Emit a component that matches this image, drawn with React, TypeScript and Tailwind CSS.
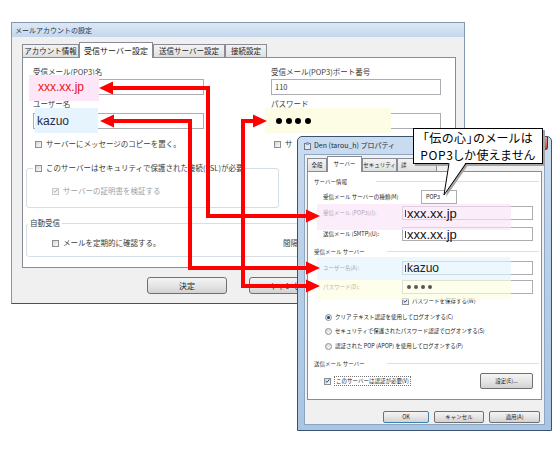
import React from "react";

const lat = "font-['Liberation_Sans','Noto_Sans_CJK_JP',sans-serif]";

function Check({ on, dim, blue }: { on?: boolean; dim?: boolean; blue?: boolean }) {
  return (
    <span
      className={`inline-flex h-[7px] w-[7px] shrink-0 items-center justify-center border ${
        dim ? "border-[#c8c8c8] bg-[#f6f6f6]" : "border-[#8e8f8f] bg-gradient-to-br from-[#d6d6d6] to-[#fbfbfb]"
      }`}
    >
      {on && (
        <svg viewBox="0 0 7 7" width="6" height="6">
          <path d="M1 3.6 L2.8 5.4 L6.2 1.2" fill="none" stroke={dim ? "#a8a8a8" : blue ? "#1f4fa8" : "#2a3f66"} strokeWidth="1.4" />
        </svg>
      )}
    </span>
  );
}

function Radio({ on }: { on?: boolean }) {
  return (
    <span className="inline-flex h-[7px] w-[7px] shrink-0 items-center justify-center rounded-full border border-[#8e8f8f] bg-gradient-to-br from-[#d8d8d8] to-[#fbfbfb]">
      {on && <span className="h-[3px] w-[3px] rounded-full bg-[#1d3f78]" />}
    </span>
  );
}

function Dots({ size, gap, color }: { size: string; gap: string; color: string }) {
  return (
    <span className={`relative z-[2] flex ${gap}`}>
      {[0, 1, 2, 3].map((i) => (
        <span key={i} className={`${size} rounded-full ${color}`} />
      ))}
    </span>
  );
}

function MailWindow() {
  const tabs = [
    { t: "アカウント情報", w: "w-[57px]", on: false },
    { t: "受信サーバー設定", w: "w-[74px]", on: true },
    { t: "送信サーバー設定", w: "w-[72px]", on: false },
    { t: "接続設定", w: "w-[42px]", on: false },
  ];
  return (
    <div className="absolute left-[11px] top-[22px] z-0 flex h-[282px] w-[454px] flex-col border border-[#8296ad] border-b-[#1f5f7f] bg-[#f0f0f0]">
      <div className="h-[14px] shrink-0 bg-gradient-to-b from-[#dde8f5] to-[#c4d7ec] pl-[3px] text-[7px] leading-[14px] text-[#1f3550]">
        メールアカウントの設定
      </div>
      <div className="px-[10px] pt-[5px]">
        <div className="flex h-[15px] items-end whitespace-nowrap">
          {tabs.map((tab) =>
            tab.on ? (
              <div
                key={tab.t}
                className={`${tab.w} relative z-[3] -mb-px flex h-[16px] items-center justify-center border border-b-0 border-[#898c95] bg-white text-[8px] text-[#222]`}
              >
                {tab.t}
              </div>
            ) : (
              <div
                key={tab.t}
                className={`${tab.w} flex h-[13px] items-center justify-center border border-b-0 border-[#898c95] bg-gradient-to-b from-[#f3f3f3] to-[#e0e0e0] text-[7.5px] text-[#222]`}
              >
                {tab.t}
              </div>
            )
          )}
        </div>
        <div className="relative h-[211px] w-[434px] border border-[#898c95] bg-white text-[7.5px] text-[#3a3a3a]">
          <div className="absolute left-[6px] top-[17px] z-[1] h-[26px] w-[70px] bg-[#fce6f8]" />
          <div className="absolute left-[12px] top-[50px] z-[1] h-[25px] w-[63px] bg-[#e6f4fd]" />
          <div className="absolute left-[242px] top-[50px] z-[1] h-[25px] w-[126px] bg-[#fdfde6]" />

          <div className="flex gap-[67px] pl-[10px] pt-[8px]">
            <div className="w-[171px]">
              <div className="h-[12px] leading-[12px]">受信メール(POP3)名</div>
              <div className="mt-[1px] flex h-[16px] items-center border border-[#abadb3] bg-white pl-[4px]">
                <span className={`relative z-[2] text-[12px] leading-[14px] text-[#e8141b] ${lat}`}>xxx.xx.jp</span>
              </div>
              <div className="mt-[3px] h-[12px] leading-[12px]">ユーザー名</div>
              <div className="mt-[3px] flex h-[16px] items-center border border-[#abadb3] bg-white pl-[3px]">
                <span className={`relative z-[2] text-[12px] leading-[14px] text-[#1d2f4f] ${lat}`}>kazuo</span>
              </div>
              <div className="mt-[10px] flex h-[10px] items-center gap-[4px] pl-[2px]">
                <Check />
                <span>サーバーにメッセージのコピーを置く。</span>
              </div>
            </div>
            <div className="w-[170px]">
              <div className="h-[12px] leading-[12px]">受信メール(POP3)ポート番号</div>
              <div className="mt-[1px] flex h-[16px] items-center border border-[#abadb3] bg-white pl-[3px]">
                <span className="text-[7.5px]">110</span>
              </div>
              <div className="mt-[3px] h-[12px] leading-[12px]">パスワード</div>
              <div className="mt-[3px] flex h-[16px] items-center border border-[#abadb3] bg-white pl-[4px]">
                <Dots size="h-[6px] w-[6px]" gap="gap-[3.7px]" color="bg-black" />
              </div>
              <div className="mt-[10px] flex h-[10px] items-center gap-[4px] pl-[3px]">
                <Check />
                <span>サ</span>
              </div>
            </div>
          </div>

          <div className="ml-[3px] mt-[19px] flex h-[40px] w-[253px] flex-col rounded-[3px] border border-[#d5dfe5]">
            <div className="-mt-[7px] ml-[6px] flex h-[12px] w-fit items-center gap-[4px] bg-white px-[2px]">
              <Check />
              <span>このサーバーはセキュリティで保護された接続(SSL)が必要</span>
            </div>
            <div className="mt-[12px] flex h-[10px] items-center gap-[4px] pl-[25px] text-[#a0a0a0]">
              <Check on dim />
              <span>サーバーの証明書を検証する</span>
            </div>
          </div>

          <div className="ml-[3px] mt-[15px] flex h-[34px] w-[420px] flex-col rounded-[3px] border border-[#d5dfe5]">
            <div className="-mt-[7px] ml-[1px] h-[12px] w-fit bg-white px-[2px] leading-[12px]">自動受信</div>
            <div className="mt-[9px] flex h-[10px] items-center">
              <div className="flex w-[256px] items-center gap-[4px] pl-[25px]">
                <Check />
                <span>メールを定期的に確認する。</span>
              </div>
              <span>間隔(分)</span>
            </div>
          </div>
        </div>
        <div className="mt-[9px] flex gap-[22px] pl-[125px]">
          {["決定", "キャンセル"].map((b) => (
            <div
              key={b}
              className="flex h-[17px] w-[80px] items-center justify-center rounded-[3px] border border-[#707070] bg-gradient-to-b from-[#f4f4f4] via-[#e6e6e6] to-[#d2d2d2] text-[8px] text-[#222]"
            >
              {b}
            </div>
          ))}
        </div>
      </div>
    </div>
  );
}

function Header({ t, w }: { t: string; w: string }) {
  return (
    <div className="flex h-[10px] items-center pl-[6px]">
      <span className={`${w} shrink-0 text-[#333]`}>{t}</span>
      <span className="mr-[2px] h-[2px] flex-1 border-t border-b border-t-[#d5dfe5] border-b-white" />
    </div>
  );
}

function Field({ w, children }: { w: string; children?: React.ReactNode }) {
  return <div className={`${w} flex h-[14px] items-center border border-[#abadb3] bg-white pl-[2px]`}>{children}</div>;
}

function PropWindow() {
  const tabs = [
    { t: "全般", w: "w-[20px]", on: false },
    { t: "サーバー", w: "w-[35px]", on: true },
    { t: "セキュリティ", w: "w-[35px]", on: false },
  ];
  return (
    <div className="absolute left-[297px] top-[136px] z-10 flex h-[295px] w-[255px] flex-col rounded-t-[5px] border border-[#3b5370] bg-gradient-to-b from-[#cadcf0] via-[#b6cee8] to-[#a9c5e4] px-[6px] pb-[5px]">
      <div className="flex h-[17px] shrink-0 items-center gap-[3px]">
        <svg width="7" height="8" viewBox="0 0 7 8">
          <rect x="0.5" y="1.5" width="6" height="6" fill="#e8e8e8" stroke="#6f7a86" />
          <rect x="2" y="0" width="3" height="3" fill="#8aa5c4" />
        </svg>
        <span className="text-[7px] text-[#1e2b3c]">Den (tarou_h) プロパティ</span>
        <span className="ml-auto mr-[-3px] h-[13px] w-[26px] self-start rounded-b-[3px] border border-t-0 border-[#6b2a1c] bg-gradient-to-b from-[#e8a08a] to-[#c4432a]" />
      </div>
      <div className="flex flex-1 flex-col border border-[#8ea5bf] bg-[#f0f0f0] pt-[2px] text-[5.5px] text-[#222]">
        <div className="ml-[2px] flex h-[14px] items-end whitespace-nowrap">
          {tabs.map((tab) =>
            tab.on ? (
              <div
                key={tab.t}
                className={`${tab.w} relative z-[3] -mb-px flex h-[16px] items-center justify-center border border-b-0 border-[#898c95] bg-white`}
              >
                {tab.t}
              </div>
            ) : (
              <div
                key={tab.t}
                className={`${tab.w} flex h-[13px] items-center justify-center border border-b-0 border-[#898c95] bg-gradient-to-b from-[#f3f3f3] to-[#e0e0e0]`}
              >
                {tab.t}
              </div>
            )
          )}
          <div className="flex h-[13px] w-[40px] items-center border border-b-0 border-[#898c95] bg-gradient-to-b from-[#f3f3f3] to-[#e0e0e0] pl-[3px]">
            詳
          </div>
        </div>
        <div className="relative ml-[2px] h-[229px] w-[235px] border border-[#898c95] bg-white">
          <div className="absolute left-[9px] top-[32px] z-[1] h-[26px] w-[194px] bg-[#fbe3f8]/65" />
          <div className="absolute left-[9px] top-[85px] z-[1] h-[23px] w-[194px] bg-[#e2f2fd]/65" />
          <div className="absolute left-[9px] top-[108px] z-[1] h-[20px] w-[194px] bg-[#fdfde2]/65" />

          <div className="mt-[5px]">
            <Header t="サーバー情報" w="w-[62px]" />
          </div>
          <div className="mt-[3px] flex h-[14px] items-center pl-[15px]">
            <span className="w-[98px]">受信メール サーバーの種類(M)</span>
            <Field w="w-[36px]">
              <span className="pl-[2px]">POP3</span>
            </Field>
          </div>
          <div className="mt-[2px] flex h-[14px] items-center pl-[15px]">
            <span className="w-[79px]">受信メール (POP3)(I):</span>
            <Field w="w-[131px]">
              <span className="relative z-[2] mr-[1px] h-[7px] w-px bg-[#444]" />
              <span className={`relative z-[2] text-[13px] leading-[13px] text-[#111] ${lat}`}>xxx.xx.jp</span>
            </Field>
          </div>
          <div className="mt-[7px] flex h-[14px] items-center pl-[15px]">
            <span className="w-[79px]">送信メール (SMTP)(U):</span>
            <Field w="w-[131px]">
              <span className="mr-[1px] h-[7px] w-px bg-[#444]" />
              <span className={`text-[13px] leading-[13px] text-[#111] ${lat}`}>xxx.xx.jp</span>
            </Field>
          </div>
          <div className="mt-[6px]">
            <Header t="受信メール サーバー" w="w-[73px]" />
          </div>
          <div className="mt-[4px] flex h-[14px] items-center pl-[15px]">
            <span className="w-[79px]">ユーザー名(A):</span>
            <Field w="w-[131px]">
              <span className="relative z-[2] mr-[1px] h-[7px] w-px bg-[#444]" />
              <span className={`relative z-[2] text-[12px] leading-[13px] text-[#222] ${lat}`}>kazuo</span>
            </Field>
          </div>
          <div className="mt-[5px] flex h-[14px] items-center pl-[15px]">
            <span className="w-[79px]">パスワード(D):</span>
            <Field w="w-[131px]">
              <span className="pl-[2px]">
                <Dots size="h-[4px] w-[4px]" gap="gap-[3px]" color="bg-[#555]" />
              </span>
            </Field>
          </div>
          <div className="mt-[2px] flex h-[10px] items-center gap-[3px] pl-[94px]">
            <Check on blue />
            <span>パスワードを保存する(W)</span>
          </div>
          <div className="mt-[6px] flex h-[10px] items-center gap-[3px] pl-[17px]">
            <Radio on />
            <span>クリア テキスト認証を使用してログオンする(C)</span>
          </div>
          <div className="mt-[4px] flex h-[10px] items-center gap-[3px] pl-[17px]">
            <Radio />
            <span>セキュリティで保護されたパスワード認証でログオンする(S)</span>
          </div>
          <div className="mt-[5px] flex h-[10px] items-center gap-[3px] pl-[17px]">
            <Radio />
            <span>認証された POP (APOP) を使用してログオンする(P)</span>
          </div>
          <div className="mt-[8px]">
            <Header t="送信メール サーバー" w="w-[73px]" />
          </div>
          <div className="mt-[4px] flex h-[16px] items-center justify-between pl-[16px] pr-[8px]">
            <span className="flex items-center gap-[3px]">
              <Check on blue />
              <span className="border border-dotted border-[#777] px-px">このサーバーは認証が必要(V)</span>
            </span>
            <div className="flex h-[16px] w-[53px] items-center justify-center rounded-[2px] border border-[#707070] bg-gradient-to-b from-[#f4f4f4] via-[#e6e6e6] to-[#d2d2d2]">
              設定(E)...
            </div>
          </div>
        </div>
        <div className="mt-[11px] flex justify-end gap-[5px] pr-[4px]">
          {["OK", "キャンセル", "適用(A)"].map((b, i) => (
            <div
              key={b}
              className={`flex h-[12px] items-center justify-center rounded-[2px] border bg-gradient-to-b from-[#f4f4f4] via-[#e6e6e6] to-[#d2d2d2] ${
                i === 0 ? "w-[46px] border-[#3c7fb1]" : i === 1 ? "w-[50px] border-[#707070]" : "w-[51px] border-[#707070]"
              }`}
            >
              {b}
            </div>
          ))}
        </div>
      </div>
    </div>
  );
}

function Arrows() {
  const red = "#ff0000";
  return (
    <svg className="pointer-events-none absolute left-0 top-0 z-20" width="560" height="450" viewBox="0 0 560 450">
      <g fill="none" stroke={red} strokeWidth="4" strokeLinejoin="miter">
        <polyline points="111,88 208,88 208,216 307,216" />
        <polyline points="112,121 190,121 190,268 307,268" />
        <polyline points="255,121 243,121 243,286 307,286" />
      </g>
      <g fill={red}>
        <polygon points="99,88 113,81.5 113,94.5" />
        <polygon points="100,121 114,114.5 114,127.5" />
        <polygon points="267,121 253,114.5 253,127.5" />
        <polygon points="320,216 306,209.5 306,222.5" />
        <polygon points="320,268 306,261.5 306,274.5" />
        <polygon points="320,286 306,279.5 306,292.5" />
      </g>
    </svg>
  );
}

function Callout() {
  return (
    <div className="absolute left-[413px] top-[128px] z-30">
      <div className="h-[36px] w-[130px] border border-black bg-white text-center text-[12px] leading-[17px] tracking-[0.6px] text-black shadow-[2px_2px_0_#a3a3a3] [font-feature-settings:'palt']">
        <div>「伝の心」のメールは</div>
        <div>POP3しか使えません</div>
      </div>
      <svg className="absolute left-[25px] top-[33px]" width="34" height="40" viewBox="0 0 34 40">
        <polygon points="13,4 8,36 30,4" fill="#a3a3a3" />
        <polygon points="11,1 6,34 28,1" fill="#fff" />
        <polyline points="11,2.5 6,34 28,2.5" fill="none" stroke="#000" strokeWidth="1" />
      </svg>
    </div>
  );
}

export default function App() {
  return (
    <div className="relative h-[450px] w-[560px] overflow-hidden bg-white font-['Noto_Sans_CJK_JP',sans-serif]">
      <MailWindow />
      <PropWindow />
      <Arrows />
      <Callout />
    </div>
  );
}
